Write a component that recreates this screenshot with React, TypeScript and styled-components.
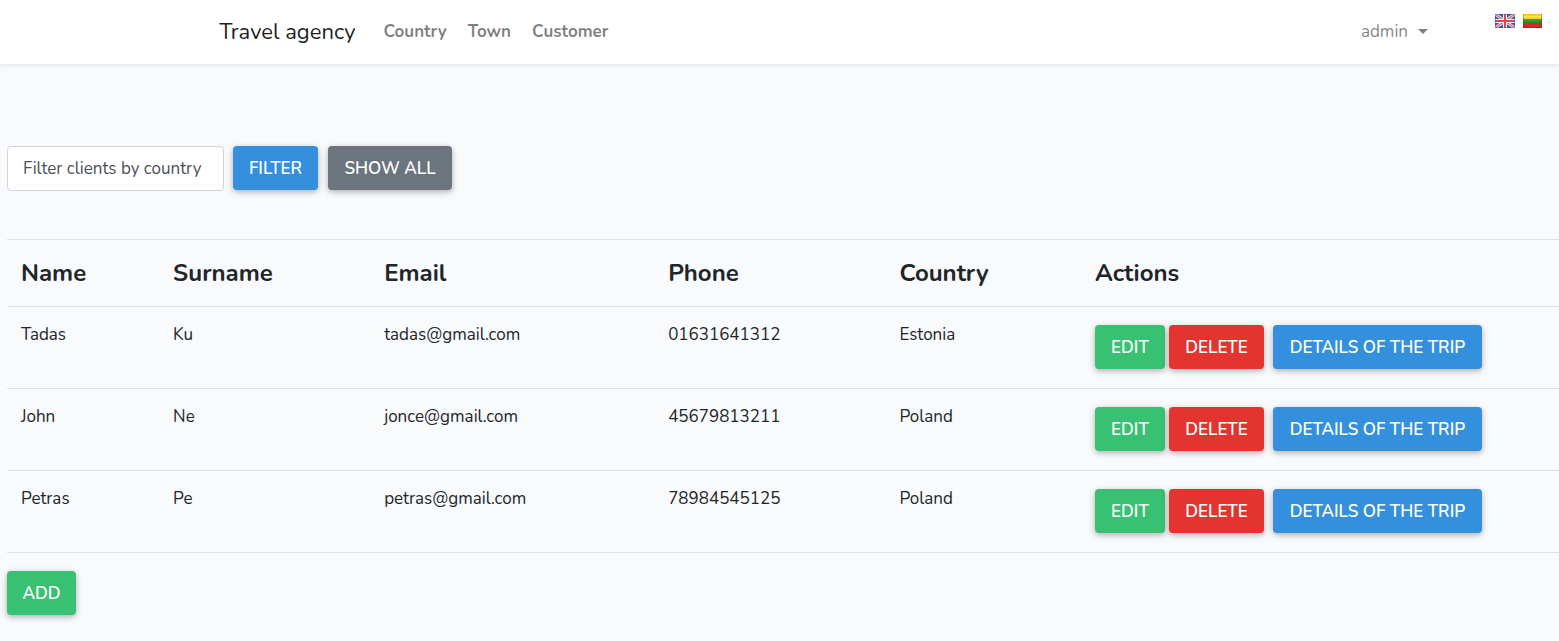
import React from "react";
import styled, { createGlobalStyle } from "styled-components";

const GlobalStyle = createGlobalStyle`
  *, *::before, *::after { box-sizing: border-box; }
  body {
    margin: 0;
    background: #f8fafc;
    color: #212529;
    font-family: Nunito, Lato, "Open Sans", sans-serif;
    font-size: 17px;
    line-height: 26px;
    overflow-x: hidden;
  }
`;

const Header = styled.header`
  display: flex;
  align-items: center;
  height: 64px;
  padding: 0 17px 0 14%;
  background: #fff;
  box-shadow: 0 2px 4px rgba(0, 0, 0, 0.08);
`;

const Brand = styled.a`
  margin: 0 28px 0 1px;
  color: rgba(0, 0, 0, 0.9);
  font-size: 22px;
  line-height: 32px;
  text-decoration: none;
`;

const Nav = styled.nav`
  display: flex;
  flex: 1;
  gap: 21px;
`;

const NavLink = styled.a`
  color: rgba(0, 0, 0, 0.5);
  font-weight: 700;
  text-decoration: none;
`;

const AccountButton = styled.button`
  display: flex;
  align-items: center;
  gap: 10px;
  padding: 0;
  border: 0;
  background: none;
  color: rgba(0, 0, 0, 0.5);
  font: inherit;
`;

const Caret = styled.span`
  margin-bottom: 2px;
  border: 5px solid transparent;
  border-top-color: currentColor;
  border-bottom: 0;
`;

const Languages = styled.div`
  display: flex;
  align-self: flex-start;
  gap: 8px;
  margin: 14px 0 0 67px;
`;

const FlagLink = styled.a`
  display: block;
  height: 14px;

  svg { display: block; }
`;

const Main = styled.main`
  padding: 82px 0 26px 7px;
`;

const FilterForm = styled.form`
  display: flex;
  align-items: flex-start;
  gap: 10px;
  margin-bottom: 48px;
`;

const CountrySelect = styled.select`
  appearance: none;
  width: 217px;
  height: 45px;
  margin-right: -1px;
  padding: 0 15px;
  border: 1px solid #ced4da;
  border-radius: 4px;
  background: #fff;
  color: #495057;
  font: inherit;
`;

const tones = {
  blue: "#3490dc",
  gray: "#6c757d",
  green: "#38c172",
  red: "#e3342f",
};

const Button = styled.button<{ $tone: keyof typeof tones; $width: number }>`
  min-width: ${(p) => p.$width}px;
  height: 44px;
  padding: 2px 0 0;
  border: 0;
  border-radius: 4px;
  background: ${(p) => tones[p.$tone]};
  box-shadow: 0 2px 5px rgba(0, 0, 0, 0.2), 0 2px 10px rgba(0, 0, 0, 0.12);
  color: #fff;
  font: inherit;
  font-weight: 600;
  text-transform: uppercase;
`;

const Table = styled.table`
  width: 100%;
  margin-bottom: 18px;
  border-collapse: separate;
  border-spacing: 0;
  border-bottom: 1px solid #dee2e6;
  table-layout: fixed;
`;

const Heading = styled.th<{ $share?: string }>`
  width: ${(p) => p.$share ?? "auto"};
  padding: 14px;
  border-top: 1px solid #dee2e6;
  font-size: 24px;
  font-weight: 700;
  line-height: 38px;
  text-align: left;
`;

const Cell = styled.td`
  padding: 15px 14px 13px;
  border-top: 1px solid #dee2e6;
  vertical-align: top;
`;

const ActionCell = styled(Cell)`
  padding: 18px 14px 19px;
`;

const Actions = styled.div`
  display: flex;
  gap: 4px;
`;

const TripForm = styled.form`
  margin-left: 5px;
`;

function UkFlag() {
  return (
    <svg width="20" height="14" viewBox="0 0 20 14" aria-hidden="true">
      <rect width="20" height="14" fill="#4459ab" />
      <path d="M0 0L20 14M20 0L0 14" stroke="#efedf5" strokeWidth="3" />
      <path d="M0 0L20 14M20 0L0 14" stroke="#e0606c" strokeWidth="1.2" />
      <path d="M10 0V14M0 7H20" stroke="#f5f3f7" strokeWidth="4" />
      <path d="M10 0V14M0 7H20" stroke="#e2444f" strokeWidth="2" />
      <rect x="0.5" y="0.5" width="19" height="13" fill="none" stroke="#29367d" strokeOpacity="0.3" />
    </svg>
  );
}

function LithuanianFlag() {
  return (
    <svg width="19" height="14" viewBox="0 0 19 14" aria-hidden="true">
      <defs>
        <linearGradient id="yellowBand" x2="0" y2="1">
          <stop offset="0" stopColor="#f0b90a" />
          <stop offset="0.5" stopColor="#ffe44a" />
          <stop offset="1" stopColor="#f5cc12" />
        </linearGradient>
        <linearGradient id="greenBand" x2="0" y2="1">
          <stop offset="0" stopColor="#4aa53a" />
          <stop offset="1" stopColor="#148020" />
        </linearGradient>
      </defs>
      <rect width="19" height="5" fill="url(#yellowBand)" />
      <rect y="5" width="19" height="5" fill="url(#greenBand)" />
      <rect y="9" width="19" height="5" fill="#cf2a26" />
      <path d="M0.5 0V14M18.5 0V14M0 13.5H19" stroke="#6b1c0c" strokeOpacity="0.3" />
    </svg>
  );
}

const customers = [
  { name: "Tadas", surname: "Ku", email: "tadas@gmail.com", phone: "01631641312", country: "Estonia" },
  { name: "John", surname: "Ne", email: "jonce@gmail.com", phone: "45679813211", country: "Poland" },
  { name: "Petras", surname: "Pe", email: "petras@gmail.com", phone: "78984545125", country: "Poland" },
];

export default function App() {
  return (
    <>
      <GlobalStyle />
      <Header>
        <Brand href="#">Travel agency</Brand>
        <Nav>
          <NavLink href="#country">Country</NavLink>
          <NavLink href="#town">Town</NavLink>
          <NavLink href="#customer">Customer</NavLink>
        </Nav>
        <AccountButton type="button">
          admin
          <Caret />
        </AccountButton>
        <Languages>
          <FlagLink href="#en" aria-label="English"><UkFlag /></FlagLink>
          <FlagLink href="#lt" aria-label="Lietuvių"><LithuanianFlag /></FlagLink>
        </Languages>
      </Header>
      <Main>
        <FilterForm onSubmit={(e) => e.preventDefault()}>
          <CountrySelect aria-label="Filter clients by country" defaultValue="">
            <option value="">Filter clients by country</option>
            <option>Estonia</option>
            <option>Poland</option>
          </CountrySelect>
          <Button $tone="blue" $width={85}>Filter</Button>
          <Button type="button" $tone="gray" $width={124}>Show all</Button>
        </FilterForm>
        <Table>
          <thead>
            <tr>
              <Heading $share="9.8%">Name</Heading>
              <Heading $share="13.6%">Surname</Heading>
              <Heading $share="18.3%">Email</Heading>
              <Heading $share="14.9%">Phone</Heading>
              <Heading $share="12.6%">Country</Heading>
              <Heading>Actions</Heading>
            </tr>
          </thead>
          <tbody>
            {customers.map((c) => (
              <tr key={c.email}>
                <Cell>{c.name}</Cell>
                <Cell>{c.surname}</Cell>
                <Cell>{c.email}</Cell>
                <Cell>{c.phone}</Cell>
                <Cell>{c.country}</Cell>
                <ActionCell>
                  <Actions>
                    <Button type="button" $tone="green" $width={70}>Edit</Button>
                    <Button type="button" $tone="red" $width={95}>Delete</Button>
                    <TripForm onSubmit={(e) => e.preventDefault()}>
                      <Button $tone="blue" $width={209}>Details of the trip</Button>
                    </TripForm>
                  </Actions>
                </ActionCell>
              </tr>
            ))}
          </tbody>
        </Table>
        <Button type="button" $tone="green" $width={69}>Add</Button>
      </Main>
    </>
  );
}
